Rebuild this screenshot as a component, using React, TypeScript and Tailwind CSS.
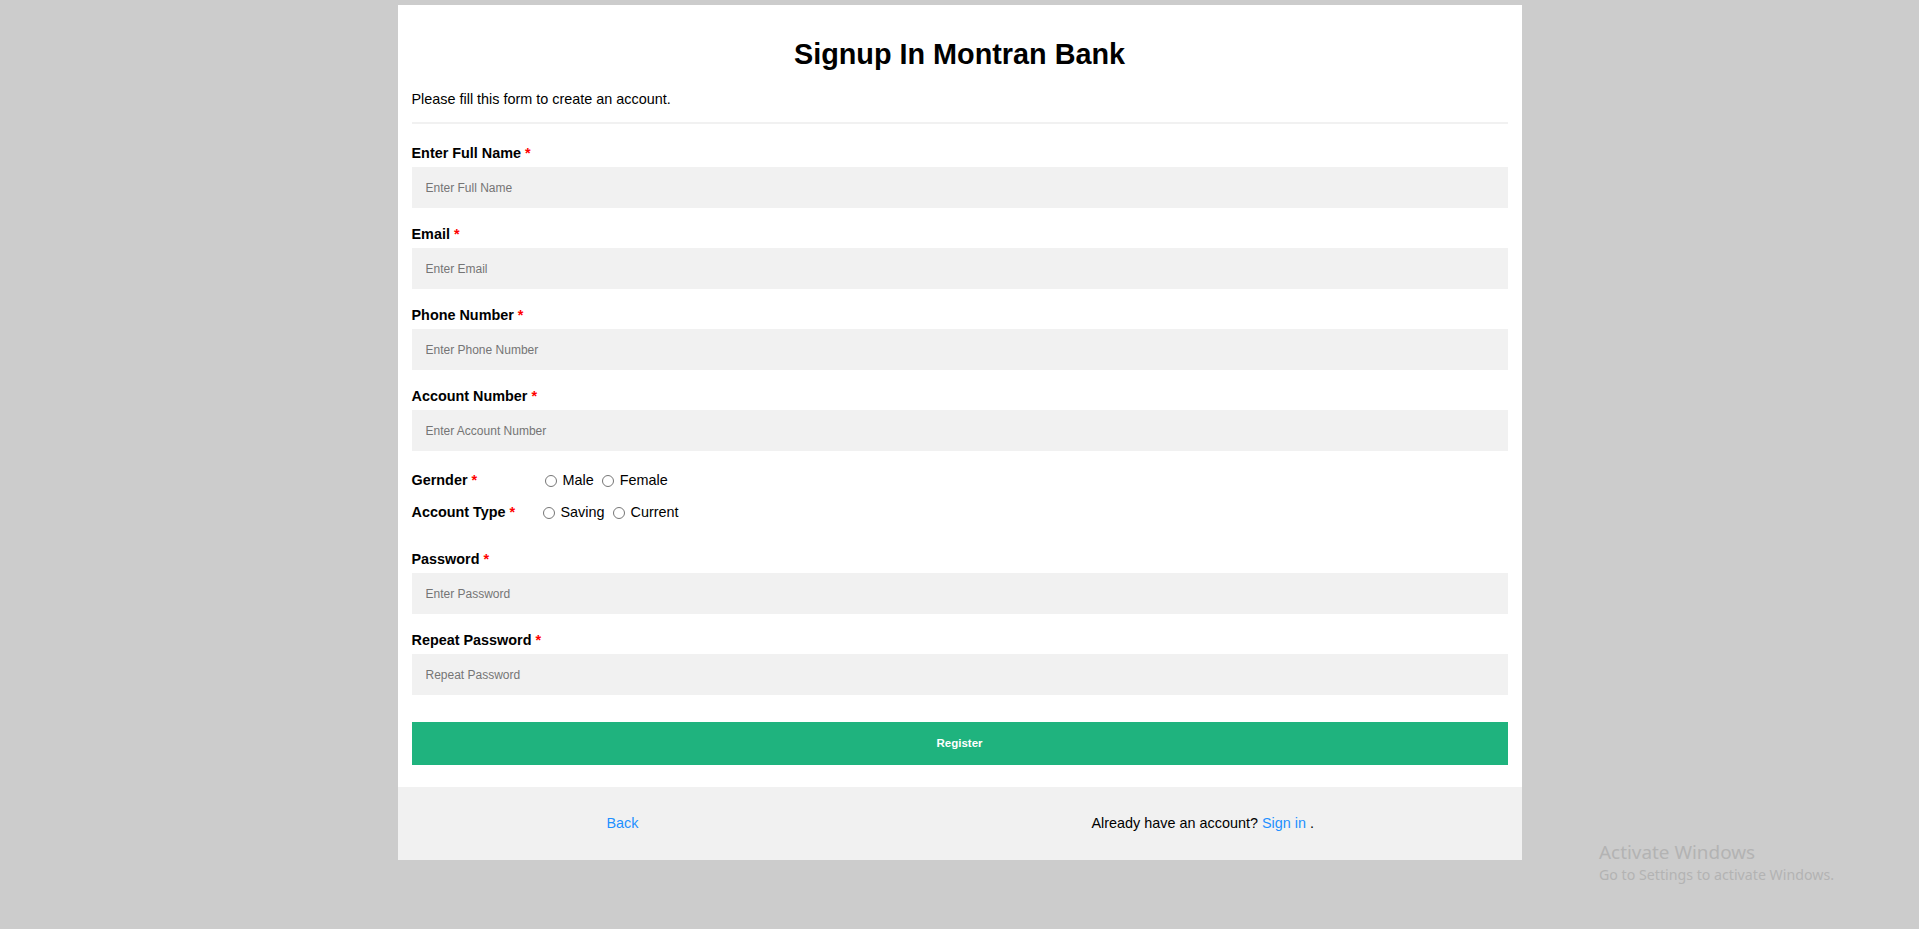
import { useState } from "react";

const fields = [
    { label: "Enter Full Name", placeholder: "Enter Full Name", type: "text" },
    { label: "Email", placeholder: "Enter Email", type: "text" },
    { label: "Phone Number", placeholder: "Enter Phone Number", type: "text" },
    { label: "Account Number", placeholder: "Enter Account Number", type: "text" },
];

function Required() {
    return <span className="text-[#ff0000]"> *</span>;
}

function Field({ label, placeholder, type }: { label: string; placeholder: string; type: string }) {
    return (
        <div>
            <label className="block text-[14.4px] leading-[17px] font-bold">
                {label}
                <Required />
            </label>
            <input
                type={type}
                placeholder={placeholder}
                className="mt-[5px] block h-[41px] w-full bg-[#f1f1f1] px-[14px] text-[12px] outline-none placeholder:text-[#757575]"
            />
        </div>
    );
}

function Radio({ name, value, label, checked, onChange }: { name: string; value: string; label: string; checked: boolean; onChange: (v: string) => void }) {
    return (
        <label className="mr-[8px] flex items-center">
            <input
                type="radio"
                name={name}
                value={value}
                checked={checked}
                onChange={() => onChange(value)}
                className="h-[12px] w-[12px] appearance-none rounded-full border border-[#767676] bg-white checked:border-[3px] checked:border-[#0075ff]"
            />
            <span className="ml-[6px] text-[14.4px] leading-[17px]">{label}</span>
        </label>
    );
}

export default function App() {
    const [gender, setGender] = useState("");
    const [accountType, setAccountType] = useState("");

    return (
        <div className="relative h-screen overflow-hidden bg-[#cccccc] pt-[5px] font-['Liberation_Sans',Arial,sans-serif] text-black">
            <div className="mx-auto w-[1124px] bg-white">
                <div className="px-[14px] pb-[22px]">
                    <h1 className="pt-[33px] text-center text-[28.8px] leading-[33px] font-bold">
                        Signup In Montran Bank
                    </h1>
                    <p className="mt-[20px] text-[14.4px] leading-[17px]">Please fill this form to create an account.</p>
                    <hr className="mt-[14px] border-0 border-t-2 border-[#f1f1f1]" />

                    {/* Text fields */}
                    <div className="mt-[21px] flex flex-col gap-[18px]">
                        {fields.map((f) => (
                            <Field key={f.label} {...f} />
                        ))}
                    </div>

                    {/* Gender */}
                    <div className="mt-[21px] flex items-center">
                        <span className="w-[133px] text-[14.4px] leading-[17px] font-bold">
                            Gernder
                            <Required />
                        </span>
                        <Radio name="gender" value="male" label="Male" checked={gender === "male"} onChange={setGender} />
                        <Radio name="gender" value="female" label="Female" checked={gender === "female"} onChange={setGender} />
                    </div>

                    {/* Account type */}
                    <div className="mt-[15px] flex items-center">
                        <span className="w-[131px] text-[14.4px] leading-[17px] font-bold">
                            Account Type
                            <Required />
                        </span>
                        <Radio name="type" value="saving" label="Saving" checked={accountType === "saving"} onChange={setAccountType} />
                        <Radio name="type" value="current" label="Current" checked={accountType === "current"} onChange={setAccountType} />
                    </div>

                    <div className="mt-[30px] flex flex-col gap-[18px]">
                        <Field label="Password" placeholder="Enter Password" type="password" />
                        <Field label="Repeat Password" placeholder="Repeat Password" type="password" />
                    </div>

                    <button className="mt-[27px] block h-[43px] w-full bg-[#1fb37e] text-[11.5px] font-bold text-white">
                        Register
                    </button>
                </div>

                {/* Footer */}
                <div className="flex h-[73px] items-center bg-[#f1f1f1] pl-[209px] text-[14.4px] leading-[17px]">
                    <a href="#" className="text-[#1e90ff]">Back</a>
                    <p className="ml-[453px]">
                        Already have an account? <a href="#" className="text-[#1e90ff]">Sign in</a> .
                    </p>
                </div>
            </div>

            {/* OS watermark */}
            <div className="absolute left-[1599px] top-[840px] font-['Noto_Sans',sans-serif] text-[#b3b3b3]">
                <div className="text-[18.9px] leading-[25px]">Activate Windows</div>
                <div className="text-[14.2px] leading-[19px]">Go to Settings to activate Windows.</div>
            </div>
        </div>
    );
}
